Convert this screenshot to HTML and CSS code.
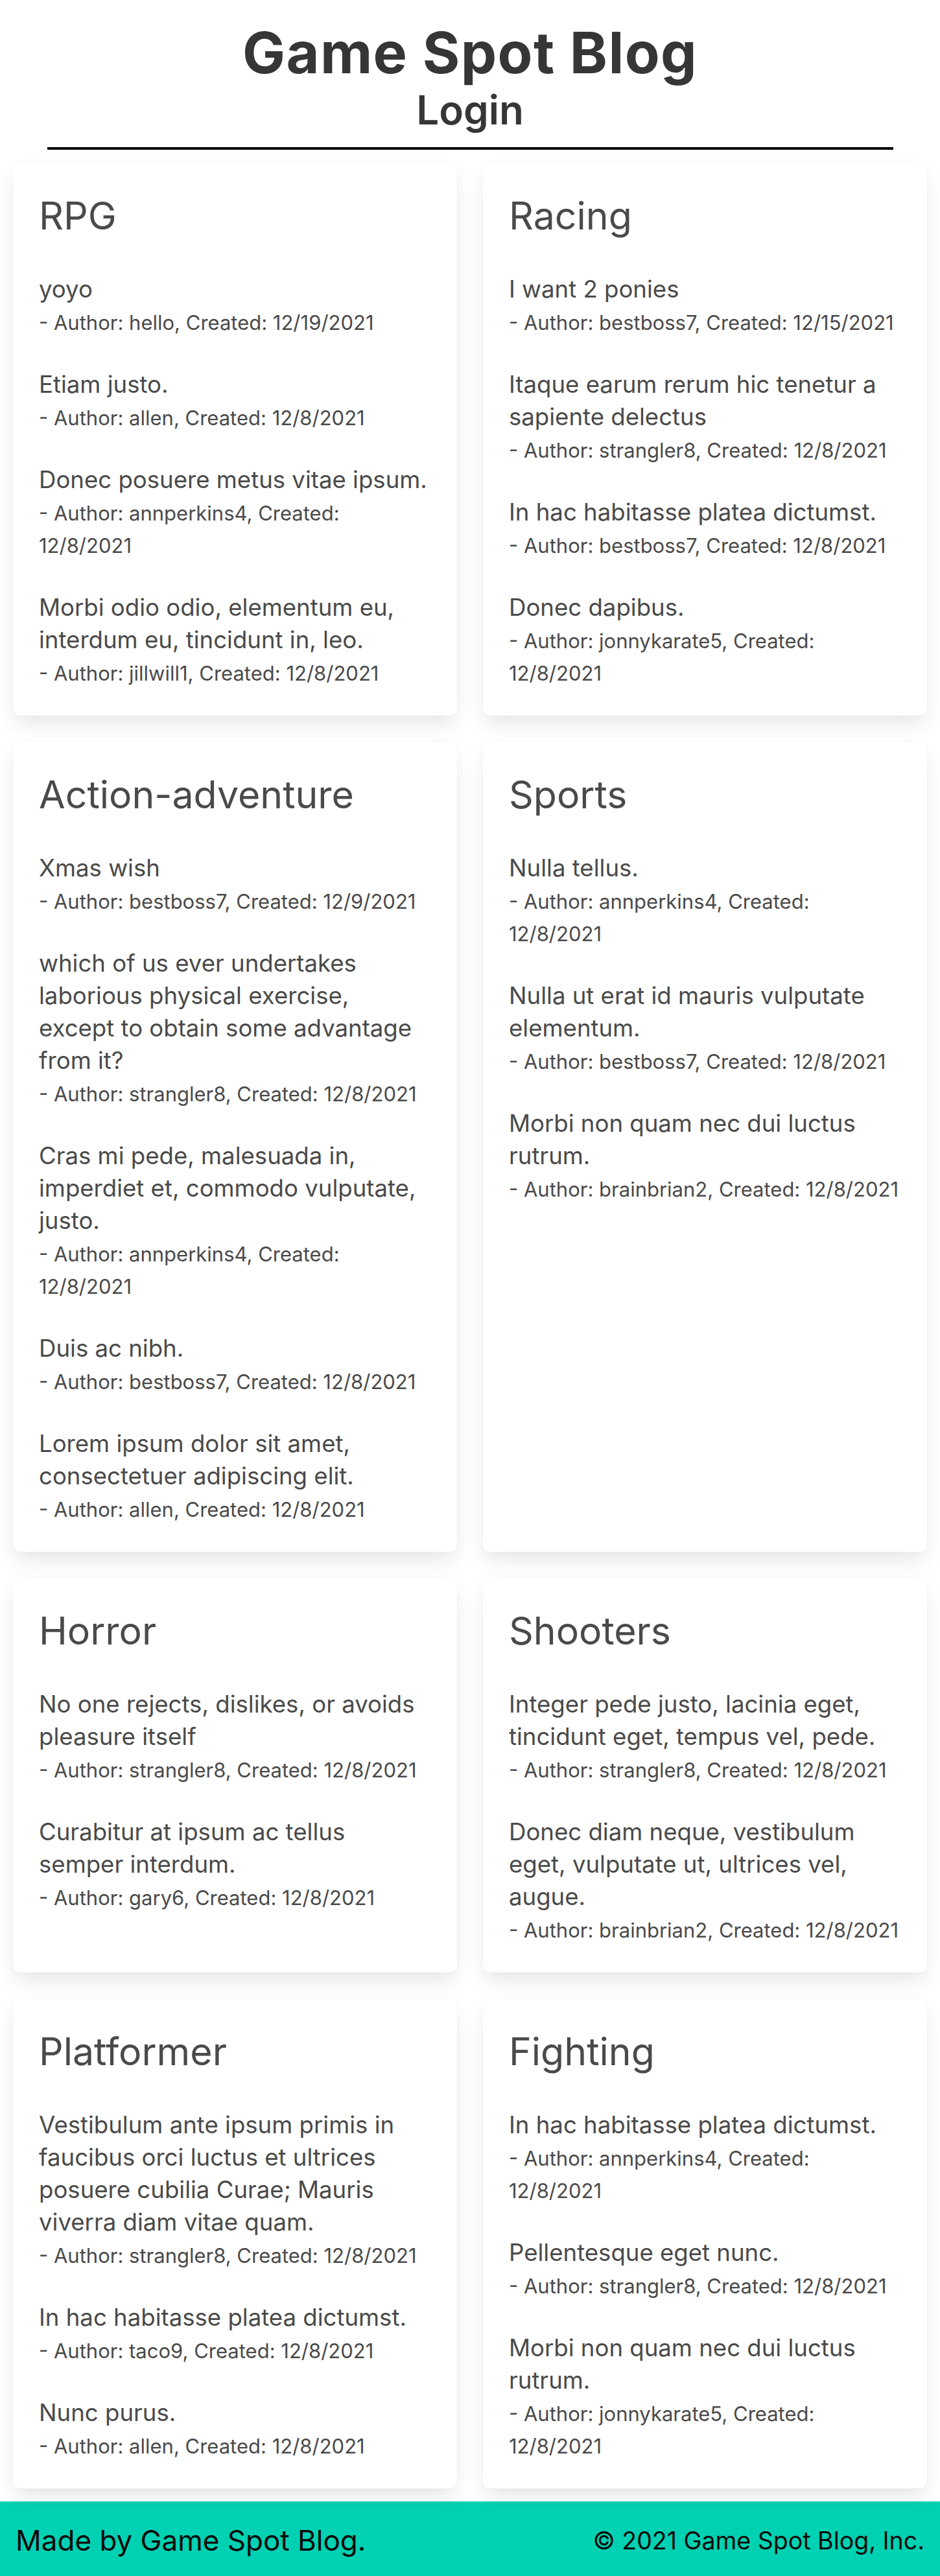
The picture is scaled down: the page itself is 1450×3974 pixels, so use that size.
FILE: index.html
```html
<!DOCTYPE html>
<html lang="en">
<head>
<meta charset="utf-8">
<title>Game Spot Blog</title>
<link rel="stylesheet" href="styles.css">
</head>
<body>
<header class="site-header">
  <h1 class="site-title">Game Spot Blog</h1>
  <a class="login-link" href="#">Login</a>
  <hr class="divider">
</header>
<main class="categories">
  <section class="card">
    <h2 class="card-title">RPG</h2>
    <article class="post"><p class="post-title">yoyo</p><p class="post-meta">- Author: hello, Created: 12/19/2021</p></article>
    <article class="post"><p class="post-title">Etiam justo.</p><p class="post-meta">- Author: allen, Created: 12/8/2021</p></article>
    <article class="post"><p class="post-title">Donec posuere metus vitae ipsum.</p><p class="post-meta">- Author: annperkins4, Created: 12/8/2021</p></article>
    <article class="post"><p class="post-title">Morbi odio odio, elementum eu, interdum eu, tincidunt in, leo.</p><p class="post-meta">- Author: jillwill1, Created: 12/8/2021</p></article>
  </section>
  <section class="card">
    <h2 class="card-title">Racing</h2>
    <article class="post"><p class="post-title">I want 2 ponies</p><p class="post-meta">- Author: bestboss7, Created: 12/15/2021</p></article>
    <article class="post"><p class="post-title">Itaque earum rerum hic tenetur a sapiente delectus</p><p class="post-meta">- Author: strangler8, Created: 12/8/2021</p></article>
    <article class="post"><p class="post-title">In hac habitasse platea dictumst.</p><p class="post-meta">- Author: bestboss7, Created: 12/8/2021</p></article>
    <article class="post"><p class="post-title">Donec dapibus.</p><p class="post-meta">- Author: jonnykarate5, Created: 12/8/2021</p></article>
  </section>
  <section class="card">
    <h2 class="card-title">Action-adventure</h2>
    <article class="post"><p class="post-title">Xmas wish</p><p class="post-meta">- Author: bestboss7, Created: 12/9/2021</p></article>
    <article class="post"><p class="post-title">which of us ever undertakes laborious physical exercise,<br>except to obtain some advantage from it?</p><p class="post-meta">- Author: strangler8, Created: 12/8/2021</p></article>
    <article class="post"><p class="post-title">Cras mi pede, malesuada in, imperdiet et, commodo vulputate, justo.</p><p class="post-meta">- Author: annperkins4, Created: 12/8/2021</p></article>
    <article class="post"><p class="post-title">Duis ac nibh.</p><p class="post-meta">- Author: bestboss7, Created: 12/8/2021</p></article>
    <article class="post"><p class="post-title">Lorem ipsum dolor sit amet, consectetuer adipiscing elit.</p><p class="post-meta">- Author: allen, Created: 12/8/2021</p></article>
  </section>
  <section class="card">
    <h2 class="card-title">Sports</h2>
    <article class="post"><p class="post-title">Nulla tellus.</p><p class="post-meta">- Author: annperkins4, Created: 12/8/2021</p></article>
    <article class="post"><p class="post-title">Nulla ut erat id mauris vulputate elementum.</p><p class="post-meta">- Author: bestboss7, Created: 12/8/2021</p></article>
    <article class="post"><p class="post-title">Morbi non quam nec dui luctus rutrum.</p><p class="post-meta">- Author: brainbrian2, Created: 12/8/2021</p></article>
  </section>
  <section class="card">
    <h2 class="card-title">Horror</h2>
    <article class="post"><p class="post-title">No one rejects, dislikes, or avoids pleasure itself</p><p class="post-meta">- Author: strangler8, Created: 12/8/2021</p></article>
    <article class="post"><p class="post-title">Curabitur at ipsum ac tellus<br>semper interdum.</p><p class="post-meta">- Author: gary6, Created: 12/8/2021</p></article>
  </section>
  <section class="card">
    <h2 class="card-title">Shooters</h2>
    <article class="post"><p class="post-title">Integer pede justo, lacinia eget, tincidunt eget, tempus vel, pede.</p><p class="post-meta">- Author: strangler8, Created: 12/8/2021</p></article>
    <article class="post"><p class="post-title">Donec diam neque, vestibulum eget, vulputate ut, ultrices vel, augue.</p><p class="post-meta">- Author: brainbrian2, Created: 12/8/2021</p></article>
  </section>
  <section class="card">
    <h2 class="card-title">Platformer</h2>
    <article class="post"><p class="post-title">Vestibulum ante ipsum primis in faucibus orci luctus et ultrices posuere cubilia Curae; Mauris viverra diam vitae quam.</p><p class="post-meta">- Author: strangler8, Created: 12/8/2021</p></article>
    <article class="post"><p class="post-title">In hac habitasse platea dictumst.</p><p class="post-meta">- Author: taco9, Created: 12/8/2021</p></article>
    <article class="post"><p class="post-title">Nunc purus.</p><p class="post-meta">- Author: allen, Created: 12/8/2021</p></article>
  </section>
  <section class="card">
    <h2 class="card-title">Fighting</h2>
    <article class="post"><p class="post-title">In hac habitasse platea dictumst.</p><p class="post-meta">- Author: annperkins4, Created: 12/8/2021</p></article>
    <article class="post"><p class="post-title">Pellentesque eget nunc.</p><p class="post-meta">- Author: strangler8, Created: 12/8/2021</p></article>
    <article class="post"><p class="post-title">Morbi non quam nec dui luctus rutrum.</p><p class="post-meta">- Author: jonnykarate5, Created: 12/8/2021</p></article>
  </section>
</main>
<footer class="site-footer">
  <p class="footer-made">Made by Game Spot Blog.</p>
  <p class="footer-copy">© 2021 Game Spot Blog, Inc.</p>
</footer>
</body>
</html>
```
FILE: styles.css
```css
* { box-sizing: border-box; }

html, body {
  margin: 0;
  padding: 0;
  background: #ffffff;
}

body {
  font-family: Inter, "Noto Sans", "Liberation Sans", sans-serif;
  color: #4a4a4a;
}

.site-header {
  padding-top: 33px;
  text-align: center;
}

.site-title {
  margin: 0;
  font-size: 88px;
  line-height: 96.8px;
  font-weight: 700;
  color: #363636;
  letter-spacing: 1.4px;
}

.login-link {
  display: block;
  margin-top: 2px;
  font-size: 62px;
  line-height: 75.6px;
  font-weight: 600;
  color: #363636;
  text-decoration: none;
}

.divider {
  width: 90%;
  margin: 20px auto 20px;
  border: 0;
  border-top: 4px solid #000000;
  height: 0;
}

.categories {
  display: grid;
  grid-template-columns: 1fr 1fr;
  gap: 40px;
  padding: 0 20px;
  margin-bottom: 20px;
}

.card {
  background: #ffffff;
  border-radius: 10px;
  padding: 45px 40px 40px;
  box-shadow: 0 16px 32px -4px rgba(10, 10, 10, 0.1), 0 0 0 1px rgba(10, 10, 10, 0.02);
}

.card-title {
  margin: 0 0 51px;
  font-size: 59px;
  line-height: 74px;
  font-weight: 400;
  color: #4a4a4a;
}

.post + .post {
  margin-top: 45px;
}

.post-title {
  margin: 0;
  font-size: 36.6px;
  line-height: 50px;
}

.post-meta {
  margin: 2px 0 0;
  font-size: 31px;
  line-height: 50px;
}

.site-footer {
  background: #00d1b2;
  height: 120px;
  padding: 0 24px;
  display: flex;
  align-items: center;
  justify-content: space-between;
  color: #0a0a0a;
}

.site-footer p {
  margin: 0;
}

.footer-made {
  font-size: 44px;
}

.footer-copy {
  font-size: 37.5px;
}
```
